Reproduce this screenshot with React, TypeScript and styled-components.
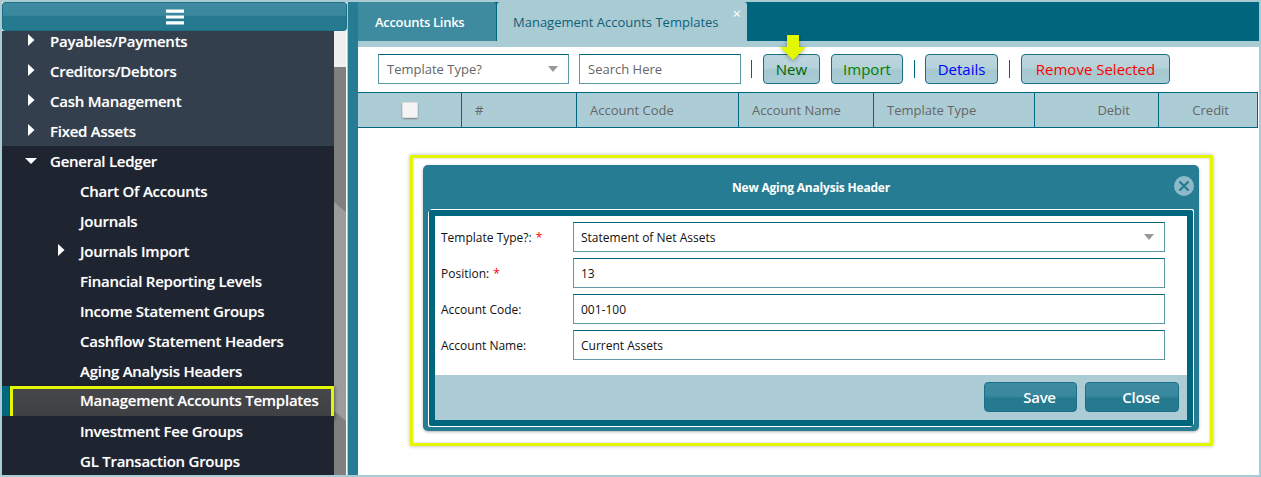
import React from "react";
import styled, { createGlobalStyle } from "styled-components";

const Global = createGlobalStyle`
  html, body { margin: 0; padding: 0; background: #fff; }
  body { font-family: "Open Sans", "Noto Sans", sans-serif; }
  * { box-sizing: border-box; }
`;

const Page = styled.div`
  width: 1261px; height: 477px; overflow: hidden;
  display: flex; background: #a9cbd4; padding: 2px;
`;

const Sidebar = styled.aside`
  width: 345px; flex: none; display: flex; flex-direction: column; position: relative;
  background: #fff;
`;
const MenuBar = styled.div`
  height: 29px; flex: none; position: relative; z-index: 2;
  display: flex; align-items: center; justify-content: center;
  border: 1px solid #1b6f85; border-radius: 3px;
  background: linear-gradient(#3f8ca2 0, #3a889e 45%, #267a90 50%, #267a90 100%);
  padding-top: 0;
`;
const MenuScroller = styled.div`
  flex: 1; display: flex; min-height: 0; overflow: hidden;
`;
const MenuList = styled.nav`
  width: 332px; flex: none; display: flex; flex-direction: column; margin-top: -5px;
  background: #1e2430;
`;
const Row = styled.div<{ $level: number; $top?: boolean }>`
  height: 30px; flex: none; display: flex; align-items: center; position: relative;
  padding-left: ${p => (p.$level === 0 ? 48 : 78)}px;
  background: ${p => (p.$top ? "#333f4d" : "#1e2430")};
  color: #fff; font-size: 15px; font-weight: 600; letter-spacing: -0.25px; white-space: nowrap;
  text-shadow: 0 0 1px rgba(255,255,255,.35);
`;
const SelectedRow = styled(Row)`
  background: #00667e;
  padding-left: 78px; height: 30px;
`;
const SelectedBox = styled.div`
  position: absolute; left: 8px; right: 0; top: 0; bottom: -3px;
  border: 3px solid #e2f700;
  background: linear-gradient(#46474b, #3f4044);
  box-shadow: 1px 1px 3px rgba(0,0,0,.4);
`;
const SelectedText = styled.span`
  position: relative; z-index: 1; top: -1px;
`;
const Caret = styled.svg<{ $x: number }>`
  position: absolute; left: ${p => p.$x}px; top: 7px;
`;
const Scrollbar = styled.div`
  width: 12px; flex: none; margin-top: 0;
  background:
    linear-gradient(#f0f0f0 0, #f0f0f0 36px, transparent 36px),
    linear-gradient(40deg, #7f7f7f 0 14%, #9c9c9c 14.2% 60%, #808080 60.2% 100%);
`;

const Gutter = styled.div`
  width: 10px; flex: none; background: #267d93; margin-left: 1px;
  border-left: 0;
`;

const Main = styled.main`
  flex: 1; min-width: 0; display: flex; flex-direction: column; position: relative; background: #fff;
`;
const TabBar = styled.div`
  height: 39px; flex: none; display: flex; background: #00667e;
`;
const Tab = styled.div<{ $active?: boolean }>`
  display: flex; align-items: center; position: relative;
  height: 39px; font-size: 13px;
  width: ${p => (p.$active ? 250 : 138)}px;
  margin-left: ${p => (p.$active ? 1 : 0)}px;
  padding-left: ${p => (p.$active ? 16 : 17)}px;
  background: ${p => (p.$active ? "#a9cbd4" : "#3e8a9e")};
  color: ${p => (p.$active ? "#0f6178" : "#fff")};
  font-weight: ${p => (p.$active ? 400 : 600)};
  letter-spacing: ${p => (p.$active ? 0 : -0.3)}px;
  border-top-left-radius: ${p => (p.$active ? 3 : 0)}px;
  border-top-right-radius: 3px;
`;
const TabClose = styled.span`
  position: absolute; right: 6px; top: 4px; color: #fff; font-size: 15px; line-height: 14px;
`;
const TabGap = styled.div`
  height: 6px; flex: none; background: #a9cbd4;
`;
const Toolbar = styled.div`
  height: 45px; flex: none; display: flex; align-items: center; padding: 0 0 1px 20px; position: relative;
`;
const Field = styled.div<{ $w: number; $gap?: number }>`
  width: ${p => p.$w}px; height: 30px; flex: none; margin-right: ${p => p.$gap ?? 0}px;
  display: flex; align-items: center; justify-content: space-between; padding: 0 8px;
  background: #fff; color: #666; font-size: 13px;
  border: 1px solid #5f98a6; border-top-color: #00667e;
`;
const Arrow = styled.i`
  width: 0; height: 0; display: block; margin-right: 2px;
  border-left: 5.5px solid transparent; border-right: 5.5px solid transparent; border-top: 6px solid #999;
`;
const Divider = styled.div<{ $l: number; $r: number }>`
  width: 1px; height: 18px; flex: none; background: #00667e;
  margin: 0 ${p => p.$r}px 0 ${p => p.$l}px;
`;
const ToolButton = styled.button<{ $w: number; $c: string }>`
  width: ${p => p.$w}px; height: 30px; flex: none; padding: 0; margin: 0;
  border: 1px solid #1b6f85; border-radius: 4px;
  background: linear-gradient(#bcd6dd 0, #b6d2da 45%, #a6c8d1 55%, #a9cbd4 100%);
  font: 400 15px "Open Sans", sans-serif; color: ${p => p.$c};
`;
const Pointer = styled.svg`
  position: absolute; left: 420px; top: -13px; pointer-events: none;
  filter: drop-shadow(0 1px 2px rgba(0,0,0,.35));
`;
const TableHead = styled.div`
  height: 36px; flex: none; display: grid;
  grid-template-columns: 104px 115px 162px 135px 161px 124px 1fr;
  background: #adcdd6;
  border-top: 1px solid #00667e; border-bottom: 1px solid #00667e; border-right: 1px solid #00667e;
  margin-right: 1px;
`;
const HeadCell = styled.div<{ $right?: boolean; $center?: boolean }>`
  display: flex; align-items: center; font-size: 13px; color: #666; white-space: nowrap;
  justify-content: ${p => (p.$right ? "flex-end" : p.$center ? "center" : "flex-start")};
  padding: ${p => (p.$right ? "0 28px 0 0" : p.$center ? "0" : "0 0 0 13px")};
  border-right: 1px solid #00667e;
  &:last-child { border-right: 0; }
`;
const Check = styled.span`
  width: 16px; height: 16px; display: block; background: #f4f4f4; border-radius: 2px;
  box-shadow: 0 1px 2px rgba(0,0,0,.35), inset 0 0 0 1px #ddd;
`;
const Body = styled.div`
  flex: 1; min-height: 0; padding: 27px 0 0 52px;
`;
const Highlight = styled.div`
  width: 803px; height: 291px; border: 3px solid #e2f700;
  padding: 7px 11px 0 10px;
  box-shadow: 0 0 4px rgba(0,0,0,.3), inset 0 0 3px rgba(0,0,0,.2);
`;
const Dialog = styled.div`
  height: 266px; background: #267d93; border-radius: 5px;
  display: flex; flex-direction: column; padding: 0 6px 5px;
  box-shadow: 0 1px 3px rgba(0,0,0,.3);
`;
const DialogTitle = styled.div`
  height: 45px; flex: none; display: flex; align-items: center; justify-content: center; position: relative;
  color: #fff; font-size: 12px; font-weight: 700; letter-spacing: -0.2px;
`;
const CloseIcon = styled.svg`
  position: absolute; right: -1px; top: 11px;
`;
const DialogFrame = styled.div`
  flex: 1; min-height: 0; border: 6px solid #00667e; background: #fff; border-radius: 2px;
  display: flex; flex-direction: column;
  box-shadow: 1px -1px 0 #fff, -1px 1px 0 #fff;
`;
const Form = styled.div`
  flex: 1; padding: 6px 22px 0 6px; display: flex; flex-direction: column; gap: 6px;
`;
const FormRow = styled.div`
  display: grid; grid-template-columns: 132px 1fr; align-items: center;
`;
const Label = styled.label`
  font-size: 12px; color: #111; white-space: nowrap;
`;
const Star = styled.span`
  color: #f00; margin-left: 4px;
`;
const Value = styled.div`
  height: 30px; display: flex; align-items: center; justify-content: space-between; padding: 0 7px;
  border: 1px solid #5f98a6; border-top-color: #00667e; color: #111; font-size: 12px;
`;
const Footer = styled.div`
  height: 45px; flex: none; background: #adcdd6; display: flex; justify-content: flex-end; align-items: flex-start;
  gap: 8px; padding: 7px 8px 0 0;
`;
const FootButton = styled.button<{ $w: number }>`
  width: ${p => p.$w}px; height: 30px; padding: 0 0 0 18px; margin: 0;
  border: 1px solid #1b6f85; border-radius: 4px;
  background: linear-gradient(#3f8ca2 0, #3a889e 45%, #267a90 55%, #267a90 100%);
  color: #fff; font: 600 15px "Open Sans", sans-serif; letter-spacing: -0.3px;
`;

const Right = ({ x }: { x: number }) => (
  <Caret $x={x} width="8" height="14" viewBox="0 0 8 14"><path d="M1 1 L7.5 7 L1 13 Z" fill="#fff" /></Caret>
);
const Down = () => (
  <Caret $x={22} width="14" height="10" viewBox="0 0 14 10" style={{ top: 10 }}><path d="M1 2 L13 2 L7 8 Z" fill="#fff" /></Caret>
);

const top = ["Payables/Payments", "Creditors/Debtors", "Cash Management", "Fixed Assets"];
const subs = ["Chart Of Accounts", "Journals", "Journals Import", "Financial Reporting Levels", "Income Statement Groups", "Cashflow Statement Headers", "Aging Analysis Headers"];

export default function App() {
  return (
    <Page>
      <Global />
      <Sidebar>
        <MenuBar>
          <svg width="18" height="16" viewBox="0 0 18 16">
            <path d="M0 0.5h18v3.2H0zM0 6.4h18v3.2H0zM0 12.3h18v3.2H0z" fill="#fff" />
          </svg>
        </MenuBar>
        <MenuScroller>
          <MenuList>
            {top.map(t => (
              <Row key={t} $level={0} $top><Right x={25} />{t}</Row>
            ))}
            <Row $level={0}><Down />General Ledger</Row>
            {subs.map(t => (
              <Row key={t} $level={1}>{t === "Journals Import" && <Right x={55} />}{t}</Row>
            ))}
            <SelectedRow $level={1}>
              <SelectedBox />
              <SelectedText>Management Accounts Templates</SelectedText>
            </SelectedRow>
            <Row $level={1}>Investment Fee Groups</Row>
            <Row $level={1}>GL Transaction Groups</Row>
          </MenuList>
          <Scrollbar />
        </MenuScroller>
      </Sidebar>
      <Gutter />
      <Main>
        <TabBar>
          <Tab>Accounts Links</Tab>
          <Tab $active>Management Accounts Templates<TabClose>×</TabClose></Tab>
        </TabBar>
        <TabGap />
        <Toolbar>
          <Field $w={191} $gap={10}>Template Type?<Arrow /></Field>
          <Field $w={162}>Search Here</Field>
          <Divider $l={10} $r={11} />
          <ToolButton $w={57} $c="#006400">New</ToolButton>
          <Pointer width="30" height="28" viewBox="0 0 30 28">
            <path d="M9 1h12v12h7L15 26 2 13h7z" fill="#e2f700" />
          </Pointer>
          <ToolButton $w={72} $c="#008000" style={{ marginLeft: 11 }}>Import</ToolButton>
          <Divider $l={11} $r={10} />
          <ToolButton $w={73} $c="#0000ff">Details</ToolButton>
          <Divider $l={11} $r={11} />
          <ToolButton $w={149} $c="#ff0000">Remove Selected</ToolButton>
        </Toolbar>
        <TableHead>
          <HeadCell $center><Check /></HeadCell>
          <HeadCell style={{ paddingLeft: 13 }}>#</HeadCell>
          <HeadCell>Account Code</HeadCell>
          <HeadCell>Account Name</HeadCell>
          <HeadCell>Template Type</HeadCell>
          <HeadCell $right>Debit</HeadCell>
          <HeadCell $right>Credit</HeadCell>
        </TableHead>
        <Body>
          <Highlight>
            <Dialog>
              <DialogTitle>
                New Aging Analysis Header
                <CloseIcon width="20" height="20" viewBox="0 0 20 20">
                  <circle cx="10" cy="10" r="10" fill="#8dbac6" />
                  <path d="M5.5 5.5 L14.5 14.5 M14.5 5.5 L5.5 14.5" stroke="#267d93" strokeWidth="2.4" />
                </CloseIcon>
              </DialogTitle>
              <DialogFrame>
                <Form>
                  <FormRow><Label>Template Type?:<Star>*</Star></Label><Value>Statement of Net Assets<Arrow style={{ marginRight: 3 }} /></Value></FormRow>
                  <FormRow><Label>Position:<Star>*</Star></Label><Value>13</Value></FormRow>
                  <FormRow><Label>Account Code:</Label><Value>001-100</Value></FormRow>
                  <FormRow><Label>Account Name:</Label><Value>Current Assets</Value></FormRow>
                </Form>
                <Footer>
                  <FootButton $w={93}>Save</FootButton>
                  <FootButton $w={94}>Close</FootButton>
                </Footer>
              </DialogFrame>
            </Dialog>
          </Highlight>
        </Body>
      </Main>
    </Page>
  );
}
